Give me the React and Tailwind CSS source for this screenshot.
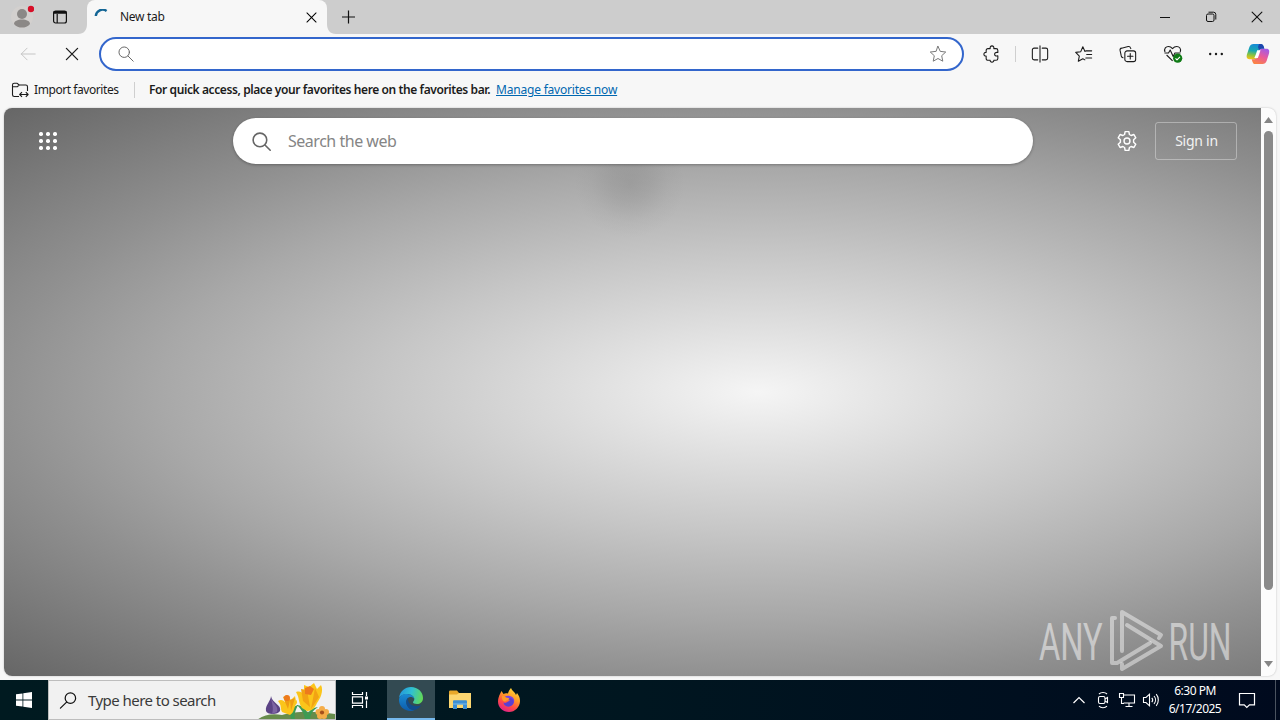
const Icon = ({ size = 18, className = '', children, sw = 1.2 }) => (
  <svg
    width={size}
    height={size}
    viewBox="0 0 20 20"
    fill="none"
    stroke="currentColor"
    strokeWidth={sw}
    strokeLinecap="round"
    strokeLinejoin="round"
    className={`shrink-0 ${className}`}
  >
    {children}
  </svg>
);

const Cross = ({ size }) => (
  <Icon size={size} sw={1.6}>
    <path d="M3 3l14 14M17 3L3 17" />
  </Icon>
);

function TabBar() {
  return (
    <div className="h-[34px] bg-[#cdcdcd] flex items-center">
      <div className="w-[44px] flex justify-center">
        <svg width="24" height="24" viewBox="0 0 24 24" className="shrink-0">
          <circle cx="12" cy="12" r="11" fill="#d3d0ce" />
          <circle cx="12" cy="9" r="5" fill="#8b8886" />
          <path d="M4 19c0-3 3.500-4.500 8-4.500s8 1.500 8 4.500c-2 2.700-5 3.600-8 3.600s-6-.9-8-3.600z" fill="#8b8886" />
          <circle cx="21" cy="4" r="3.200" fill="#d70f28" />
        </svg>
      </div>
      <div className="w-[33px] flex justify-center pr-[1px]">
        <svg width="16" height="16" viewBox="0 0 16 16" fill="none" stroke="#111" strokeWidth="1.200">
          <rect x="1.600" y="2" width="12.800" height="12" rx="2" />
          <path d="M1.600 3.800h12.800M1.600 3h12.800" strokeWidth="2" />
          <path d="M5.200 5v9" />
        </svg>
      </div>
      <svg width="10" height="34" viewBox="0 0 10 34" className="shrink-0">
        <path d="M10 24v10H1c6 0 9-4 9-10z" fill="#f7f7f7" />
      </svg>
      <div className="w-[240px] h-full bg-[#f7f7f7] rounded-t-lg flex items-center pl-[7px] pr-[9px]">
        <svg width="16" height="16" viewBox="0 0 16 16" fill="none" className="mr-[10px]">
          <path d="M1.800 7A6.800 6.800 0 0 1 12.600 2" stroke="#136595" strokeWidth="2.400" />
        </svg>
        <span className="flex-1 text-xs text-[#1b1b1b] tracking-[-0.300px] whitespace-nowrap">New tab</span>
        <Cross size={13} />
      </div>
      <svg width="10" height="34" viewBox="0 0 10 34" className="shrink-0">
        <path d="M0 24v10h9c-6 0-9-4-9-10z" fill="#f7f7f7" />
      </svg>
      <svg width="22" height="16" viewBox="0 0 22 16" stroke="#111" strokeWidth="1.200">
        <path d="M11.500 1.500v13M5 8h13" />
      </svg>
      <div className="flex-1" />
      <div className="flex h-full items-center text-[#111]">
        <div className="w-[46px] flex justify-center">
          <svg width="12" height="12" viewBox="0 0 12 12" stroke="currentColor">
            <path d="M1 6.500h10" />
          </svg>
        </div>
        <div className="w-[46px] flex justify-center">
          <svg width="12" height="12" viewBox="0 0 12 12" fill="none" stroke="currentColor">
            <rect x="1.500" y="3" width="7.500" height="7.500" rx="1.500" />
            <path d="M3.500 1.200h5a2.300 2.300 0 0 1 2.300 2.300v5" />
          </svg>
        </div>
        <div className="w-[46px] flex justify-center">
          <Cross size={14} />
        </div>
      </div>
    </div>
  );
}

const Cell = ({ children }) => <div className="w-[44px] flex justify-center items-center">{children}</div>;

function Copilot() {
  return (
    <svg width="24" height="22" viewBox="0 0 24 22">
      <defs>
        <linearGradient id="cpA" x1=".5" y1="0" x2=".3" y2="1">
          <stop offset="0" stopColor="#1789d8" />
          <stop offset=".45" stopColor="#18a9b0" />
          <stop offset=".75" stopColor="#8fc43c" />
          <stop offset="1" stopColor="#f2c21a" />
        </linearGradient>
        <linearGradient id="cpB" x1=".8" y1="0" x2=".3" y2="1">
          <stop offset="0" stopColor="#a05be8" />
          <stop offset=".5" stopColor="#ea5a9a" />
          <stop offset="1" stopColor="#fb8444" />
        </linearGradient>
      </defs>
      <path d="M7.500 1h7.200c1.700 0 2.400 1 2.900 2.600l.7 2.200h-2.600c-1.600 0-2.400.8-2.900 2.400l-1.900 5.600c-.5 1.700-1.200 2.400-2.900 2.400H3.400C.7 16.200.3 14 .9 11.600L3.400 4C4.200 1.900 5.400 1 7.500 1z" fill="url(#cpA)" />
      <path d="M13 1h2c1.500 0 2.200 1 2.700 2.600l.7 2.200h-2.700c-1.300 0-2 .5-2.500 1.600L12 4z" fill="#1d46ad" />
      <path d="M16.500 21H9.300c-1.700 0-2.400-1-2.900-2.600l-.7-2.200h2.600c1.600 0 2.400-.8 2.900-2.400l1.900-5.600c.5-1.700 1.200-2.400 2.900-2.400h4.500c2.700 0 3.100 2.200 2.500 4.600L20.600 18c-.8 2.100-2 3-4.100 3z" fill="url(#cpB)" />
      <path d="M11.200 7.300h3.300L13 12l-1.200 3H8.300l1.500-3.500z" fill="#fff" />
    </svg>
  );
}

function Toolbar() {
  return (
    <div className="h-10 flex items-center text-[#1b1b1b]">
      <div className="w-[99px] pl-[6px] flex">
        <Cell>
          <Icon size={18} sw={1.1} className="text-[#c4c4c4]">
            <path d="M18 10H2.500M9 3.500L2.500 10 9 16.500" />
          </Icon>
        </Cell>
        <Cell>
          <Cross size={16} />
        </Cell>
      </div>
      <div className="w-[865px] h-[34px] rounded-full border-2 border-[#3366cc] bg-white flex items-center justify-between pl-[16px] pr-[15px]">
        <Icon size={18} sw={1.1} className="text-[#666]">
          <circle cx="8" cy="8" r="5.800" />
          <path d="M12.300 12.300L18 18" />
        </Icon>
        <Icon size={18} sw={1.1} className="text-[#777]">
          <path d="M10 1.500l2.500 5.600 6.100.7-4.500 4.100 1.200 6.100L10 15l-5.300 3 1.200-6.100L1.400 7.800l6.100-.7z" />
        </Icon>
      </div>
      <div className="flex items-center pl-[5px]">
        <Cell>
          <Icon size={18} className="ml-[2px]">
            <path d="M3.500 6C3.500 4.700 4.300 4 5.500 4H8c-.4-2 .6-3 2-3s2.400 1 2 3h2.500c1.200 0 2 .7 2 2v2.300c-2.400-.5-3.600.5-3.600 1.900s1.200 2.400 3.600 1.900V15c0 1.300-.8 2-2 2H12c.2 1.300-.7 2-2 2s-2.200-.7-2-2H5.500c-1.200 0-2-.7-2-2v-2.800c-1.700.2-2.500-.8-2.500-2s.8-2.200 2.500-2z" />
          </Icon>
        </Cell>
        <div className="w-[5px] h-4 border-l border-[#cfcfcf] ml-[2px] mr-[-2px]" />
        <Cell>
          <Icon size={18} className="mr-[1px]">
            <path d="M10 1v18M7.500 3.500h-4C2.500 3.500 1.500 4.300 1.500 5.500v9c0 1.200 1 2 2 2h4M12.500 3.500h4c1.200 0 2 .8 2 2v9c0 1.200-.8 2-2 2h-4" />
          </Icon>
        </Cell>
        <Cell>
          <Icon size={18}>
            <path d="M12 6.500h6.500M13 10.500h5.500M12 14.500h6.500M11 16.500l-2.300-1.300-5 2.800 1.100-5.700L.8 8.200l5.600-.8L8.700 2l2.400 5.200" />
          </Icon>
        </Cell>
        <Cell>
          <Icon size={18}>
            <rect x="6.500" y="6.500" width="12" height="12" rx="2.500" />
            <path d="M12.500 9.500v6M9.500 12.500h6M4.500 14.200c-1-.2-1.700-1-2-2L1.200 6c-.2-1.200.5-2.300 1.700-2.500l7.300-1.800c1.200-.3 2.200.3 2.600 1.500l.3.800" />
          </Icon>
        </Cell>
        <Cell>
          <svg width="20" height="20" viewBox="0 0 20 20" fill="none" stroke="currentColor" strokeWidth="1.100" strokeLinejoin="round" className="ml-[2px]">
            <path d="M2 8C.7 4.500 3 2.500 5.500 2.500c2 0 3 1 4 2.200 1-1.200 2.200-2.200 4.200-2.200 2.600 0 4.800 2.200 3.500 5.500M3.600 11l6 5.800M1.500 9h4l1.700-3 3 6.500 1.700-3.500h5.600" />
            <circle cx="14.700" cy="14.200" r="4.600" fill="#0f7b16" stroke="none" />
            <path d="M12.500 14.300l1.500 1.500 3-3" stroke="#fff" />
          </svg>
        </Cell>
        <Cell>
          <svg width="16" height="4" viewBox="0 0 16 4" fill="currentColor">
            <circle cx="2.200" cy="2" r="1.200" />
            <circle cx="8" cy="2" r="1.200" />
            <circle cx="13.800" cy="2" r="1.200" />
          </svg>
        </Cell>
        <div className="w-[40px] flex justify-center">
          <Copilot />
        </div>
      </div>
    </div>
  );
}

function FavoritesBar() {
  return (
    <div className="h-[34px] flex items-center pl-[11px] pb-[2px] text-xs text-[#1b1b1b] whitespace-nowrap">
      <svg width="18" height="16" viewBox="0 0 18 16" fill="none" stroke="currentColor" strokeWidth="1.100" strokeLinejoin="round" className="shrink-0 mr-[5px]">
        <path d="M8 14.500H3.200c-1 0-1.700-.7-1.700-1.700V3c0-1 .7-1.700 1.700-1.700h3l2 1.700h6.600c1 0 1.700.7 1.700 1.700V9M1.500 4.800h4.700L8.200 3M8.800 12.500H17M11 10.200l-2.300 2.300L11 14.800M14.800 10.200l2.300 2.300-2.300 2.300" />
      </svg>
      <span className="w-[100px] tracking-[-0.430px]">Import favorites</span>
      <div className="w-[15px] h-4 border-l border-[#cfcfcf]" />
      <span className="w-[347px] font-semibold tracking-[-0.400px]">
        For quick access, place your favorites here on the favorites bar.
      </span>
      <a className="underline text-[#0067b0] tracking-[-0.200px]">Manage favorites now</a>
    </div>
  );
}

function Watermark() {
  return (
    <svg width="204" height="70" viewBox="0 0 204 70" className="absolute right-[21px] bottom-px" fill="rgba(255,255,255,0.5)">
      <g fontFamily="Roboto" fontSize="51" fontWeight="400">
        <text transform="translate(3 54.500) scale(0.640 1)">ANY</text>
        <text transform="translate(132.500 54.500) scale(0.625 1)">RUN</text>
      </g>
      <g transform="translate(64 0)" fill="none" stroke="rgba(255,255,255,0.45)" strokeWidth="4" strokeLinejoin="round" strokeLinecap="round">
        <path d="M15 13h-3v45h5l33-20" />
        <path d="M22 46V7l39 23-2 3" />
        <path d="M27 20l34 21-39 23v-5" />
      </g>
    </svg>
  );
}

function NewTabPage() {
  return (
    <div className="mx-1 h-[568px] flex rounded-lg overflow-hidden bg-[#fcfcfc] shadow-[0_0_2px_rgba(0,0,0,0.25)]">
      <div className="relative flex-1 bg-[radial-gradient(ellipse_at_60%_50%,#f5f5f5,#c6c6c6_35%,#a8a8a8_56%,#909090_71%,#666666)]">
        <div className="absolute left-[571px] top-[22px] w-[110px] h-[108px] bg-[radial-gradient(closest-side,rgba(90,90,90,0.19),rgba(90,90,90,0.13)_35%,rgba(90,90,90,0.04)_70%,transparent)]" />
        <div className="relative flex items-center pt-[10px]">
          <div className="w-[229px] pl-[34px]">
            <svg width="20" height="20" viewBox="0 0 20 20" fill="#fff">
              {[3, 10, 17].map((y) =>
                [3, 10, 17].map((x) => <rect key={`${x}-${y}`} x={x - 2} y={y - 2} width="4" height="4" rx="1.700" />)
              )}
            </svg>
          </div>
          <div className="w-[800px] h-[46px] rounded-full bg-white flex items-center pl-[18px] shadow-[0_1px_3px_rgba(0,0,0,0.3)]">
            <Icon size={21} sw={1.5} className="text-[#666] mr-[16px]">
              <circle cx="8.500" cy="8.500" r="6.500" />
              <path d="M13.300 13.300l5 5" />
            </Icon>
            <span className="text-base text-[#858585] tracking-[-0.480px]">Search the web</span>
          </div>
          <div className="w-[122px] flex justify-end pr-[17px]">
            <Icon size={22} sw={1.3} className="text-white">
              <circle cx="10" cy="10" r="2.700" />
              <path d="M8.300 1.500h3.400l.5 2.600 1.500.9 2.600-.9 1.700 3-2 1.800v2.200l2 1.800-1.700 3-2.600-.9-1.500.9-.5 2.600H8.300l-.5-2.600-1.500-.9-2.600.9-1.700-3 2-1.800V8.900L2 7.100l1.700-3 2.600.9 1.500-.9z" />
            </Icon>
          </div>
          <div className="w-[82px] h-[38px] border border-white/35 rounded-[3px] flex items-center justify-center pl-[1px] text-sm text-[#f2f2f2] tracking-[-0.250px]">
            Sign in
          </div>
        </div>
        <Watermark />
      </div>
      <div className="w-[15px] flex flex-col items-center pt-[9px] pb-[9px]">
        <svg width="9" height="6" viewBox="0 0 9 6" fill="#858585">
          <path d="M4.500 0L9 6H0z" />
        </svg>
        <div className="w-[9px] h-[459px] mt-[8px] rounded-full bg-[#8a8a8a]" />
        <div className="flex-1" />
        <svg width="9" height="6" viewBox="0 0 9 6" fill="#858585">
          <path d="M4.500 6L9 0H0z" />
        </svg>
      </div>
    </div>
  );
}

function Flowers() {
  return (
    <svg width="80" height="38" viewBox="1 1 80 38" className="shrink-0">
      <path d="M3 40c6-5 15-7 25-5 12-3 26-5 53-1v6z" fill="#668c4b" />
      <path d="M17 16c0 5-6 9-5 15 1 4 12 4 14 0 2-6-8-8-9-15z" fill="#5b4385" />
      <path d="M17 18c2 6 8 8 6 14l-5 2c2-6 0-10-1-16z" fill="#7d65a2" />
      <path d="M37 40c0-4-1-9-8-15 6 1 8 4 9 8 0-4 2-7 6-8-3 6-4 10-3 15zM51 40c0-5-3-10-8-15 7 1 10 5 11 10 1-5 4-7 10-8-6 4-8 8-8 13z" fill="#3d9b53" />
      <path d="M28 32c-2-4 0-6-4-11 3-2 5-1 7 1l2-6 4 4 4-4 1 5c0-2 1-1 1 2-4 5-2 9-7 12z" fill="#fbc51a" />
      <path d="M29 17l4-2 3 5-2 9zM36 20l5-2-4 13z" fill="#ef9c13" />
      <circle cx="33" cy="18" r="3" fill="#ed7a1c" />
      <path d="M48 28c-4-6-2-9-6-16 4-1 5 0 8 2l0-9 5 2 5-4 3 6 4-4c3 6-1 14-4 18-2 5-5 8-10 8z" fill="#fbc51a" />
      <path d="M47 9l6 1 3 17-7-6zM61 8l-4 21 8-12z" fill="#f2a313" />
      <path d="M51 8l5-2 4 3-3 6-6-1z" fill="#ed7a1c" />
      <g fill="#f5ad48">
        <circle cx="68" cy="29" r="3" />
        <circle cx="72" cy="32" r="3" />
        <circle cx="70" cy="36" r="3" />
        <circle cx="66" cy="36" r="3" />
        <circle cx="64.500" cy="32" r="3" />
      </g>
      <circle cx="68" cy="32.500" r="2.100" fill="#a5501b" />
    </svg>
  );
}

function EdgeLogo() {
  return (
    <svg width="26" height="26" viewBox="0 0 26 26">
      <defs>
        <linearGradient id="edA" x1="0" y1=".3" x2="1" y2=".5">
          <stop offset="0" stopColor="#2496dc" />
          <stop offset=".5" stopColor="#30c0d2" />
          <stop offset="1" stopColor="#62d957" />
        </linearGradient>
        <linearGradient id="edB" x1="0" y1="0" x2="0" y2="1">
          <stop offset="0" stopColor="#1a8bd3" />
          <stop offset="1" stopColor="#0d5bab" />
        </linearGradient>
      </defs>
      <path d="M1 12C2 5 7 1 13 1c7 0 12 5 12 11 0 4-3 6-6 6-2.500 0-4-.8-4-1.700 0-.7 1.300-1.300 1.300-3.200C16.300 9.500 11 7 6.500 8.200 3.500 9 1.600 10.500 1 12z" fill="url(#edA)" />
      <path d="M1 13.500C1.300 9.800 5 7.800 9 8c4.500.2 7.300 2.500 7.300 5.100-1-1.500-2.300-2-3.600-2-2.700 0-4.400 2.300-4.400 5 0 4.300 3.700 8.400 8.200 7.800-1.200.7-2.300 1.100-3.700 1.100C6 25 .6 20 1 13.500z" fill="url(#edB)" />
      <path d="M10 12c-1.200 1-1.700 2.600-1.700 4.100 0 4.500 4 8.500 8.200 7.800 2.700-.6 5.300-2.700 6.700-5-1.800 1-4 1.400-6 1.200C12.500 19.800 9.500 16 10 12z" fill="#114a8b" />
    </svg>
  );
}

function Explorer() {
  return (
    <svg width="22" height="20" viewBox="0 0 22 20">
      <path d="M0 2c0-1 .5-1.500 1.300-1.500H8L10 3h12v3H0z" fill="#e8a82a" />
      <path d="M0 4.500h8L10 3h12v15H0z" fill="#fcd670" />
      <path d="M4 19v-7.500c0-.8.500-1.200 1.200-1.200h11.600c.7 0 1.200.4 1.200 1.200V19h-4v-4.500H8V19z" fill="#3d8fd4" />
      <path d="M4 13.500h14v1H4z" fill="#7dbbe8" />
    </svg>
  );
}

function Firefox() {
  return (
    <svg width="24" height="24" viewBox="0 0 24 24">
      <defs>
        <linearGradient id="ffA" x1=".8" y1="0" x2=".3" y2="1">
          <stop offset="0" stopColor="#ffe13a" />
          <stop offset=".4" stopColor="#ff9a28" />
          <stop offset=".7" stopColor="#ff4a45" />
          <stop offset="1" stopColor="#e0218a" />
        </linearGradient>
      </defs>
      <path d="M3 6l1.500-3 2 3C8 5 9.500 5 11 5.500 11.500 3 13 1 14 0c1 3 4 4 5 7l1-2c2 2.500 3 5 3 8 0 6-5 11-11 11S1 19.500 1 13.500C1 10.500 2 8 3 6z" fill="url(#ffA)" />
      <path d="M8 8.500c3-1.500 8-.5 9 3 .8 4-2 7-5.500 7-3 0-5-2-5-4.300 1 1 3 1 4.500 0 .8-.7 1.500-1.200 2.500-1.200-1-1-2.500-1-3.500-1.500C8.700 11 7.500 10 8 8.500z" fill="#7542e5" />
      <path d="M11 13.500c.8-.4 1.600-.6 2.500-.5-1-1-2.500-1-3.500-1.500l3-1.500c2.500.5 4 2.500 3.500 5-.8 2.300-3 3.400-5 3.500-2.300 0-4.300-1.300-4.800-3.200 1.500 0 3.300-.6 4.300-1.800z" fill="#5a3fd0" />
      <path d="M5 8c1.500-.5 3 .2 4 1.500 1.500.2 3 .5 3.500 1.500-1 1.500-3.500 1-4 2.500-2 .5-4-2-3.500-5.500z" fill="#ff9a28" />
    </svg>
  );
}

function Tray() {
  return (
    <div className="flex items-center text-white">
      <div className="w-6 flex justify-center">
        <svg width="14" height="8" viewBox="0 0 14 8" fill="none" stroke="currentColor" strokeWidth="1.200">
          <path d="M1.500 7L7 1.500 12.500 7" />
        </svg>
      </div>
      <div className="w-6 flex justify-center">
        <svg width="14" height="18" viewBox="0 0 14 18" fill="none" stroke="currentColor" strokeWidth="1.100">
          <rect x="2.500" y="5.500" width="6.500" height="7" rx="1.500" />
          <path d="M9 8l2.500-1.500v5L9 10M3 3c2-2 6-2 8 0M3 15.200c2 2 6 2 8 0" />
        </svg>
      </div>
      <div className="w-6 flex justify-center">
        <svg width="18" height="16" viewBox="0 0 18 16" fill="none" stroke="currentColor" strokeWidth="1.100">
          <path d="M5.500 3H16.500v8H5.500M11 11v3M7.500 14.500h7M1.500 1.500h4v4h-4zM3.500 5.500v6H6" />
        </svg>
      </div>
      <div className="w-6 flex justify-center">
        <svg width="18" height="16" viewBox="0 0 18 16" fill="none" stroke="currentColor" strokeWidth="1.100">
          <path d="M1.500 5.500H4l3.500-3.300v11.600L4 10.500H1.500zM9.800 5.800c1 1.200 1 3.200 0 4.400M12 4c2 2.300 2 5.700 0 8M14.200 2.200c2.800 3.300 2.800 8.300 0 11.600" />
        </svg>
      </div>
      <div className="w-16 flex flex-col items-center text-xs leading-[18px] tracking-[-0.500px] whitespace-nowrap">
        <span>6:30 PM</span>
        <span>6/17/2025</span>
      </div>
      <div className="w-[40px] flex justify-center">
        <svg width="18" height="18" viewBox="0 0 18 18" fill="none" stroke="currentColor" strokeWidth="1.200">
          <path d="M1.500 2.500h15v11.300h-5L8.800 16.500l-2.600-2.700H1.500z" />
        </svg>
      </div>
      <div className="w-[5px] h-10 ml-2 border-l border-[#4a5360]" />
    </div>
  );
}

function Taskbar() {
  return (
    <div className="h-10 flex items-center bg-linear-to-r from-[#001a20] via-[#001620] to-[#000a1e]">
      <div className="w-12 flex justify-center">
        <svg width="16" height="16" viewBox="0 0 16 16" fill="#fff">
          <path d="M0 2.300L6.500 1.400v6.200H0zM7.300 1.300L16 0v7.600H7.300zM0 8.400h6.500v6.200L0 13.700zM7.300 8.400H16V16l-8.700-1.300z" />
        </svg>
      </div>
      <div className="w-72 h-full bg-[#f1f1f1] border border-[#bdbdbd] flex items-center pl-[10px]">
        <Icon size={19} sw={1.3} className="text-[#111]">
          <circle cx="12" cy="7.500" r="5.500" />
          <path d="M8 11.700L1.500 18" />
        </Icon>
        <span className="flex-1 ml-[10px] text-[15px] text-[#3a3a3a] tracking-[-0.550px]">Type here to search</span>
        <Flowers />
      </div>
      <div className="w-[51px] pr-[3px] flex justify-center text-white">
        <svg width="18" height="18" viewBox="0 0 18 18" fill="none" stroke="currentColor" strokeWidth="1.200">
          <path d="M1.500 1v2.500h10V1M1.500 17v-2.500h10V17M1.500 5.800h10v6.400h-10zM15.500 1v4M15.500 9.500V17" />
          <path d="M14 5.500h3v3h-3z" fill="currentColor" stroke="none" />
        </svg>
      </div>
      <div className="w-12 h-full bg-[#334a52] border-b-2 border-[#76b9ed] flex items-center justify-center">
        <EdgeLogo />
      </div>
      <div className="w-[49px] flex justify-center">
        <Explorer />
      </div>
      <div className="w-[49px] flex justify-center">
        <Firefox />
      </div>
      <div className="flex-1" />
      <Tray />
    </div>
  );
}

export default function App() {
  return (
    <div className="w-[1280px] h-[720px] overflow-hidden bg-[#f7f7f7] flex flex-col font-['Noto_Sans','Open_Sans',sans-serif]">
      <TabBar />
      <Toolbar />
      <FavoritesBar />
      <NewTabPage />
      <div className="h-1" />
      <Taskbar />
    </div>
  );
}
